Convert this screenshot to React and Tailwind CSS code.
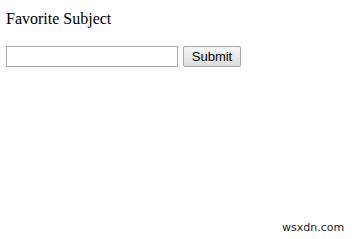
import React from 'react';

const App = () => {
  return (
    <div className="relative w-[356px] h-[239px] bg-white overflow-hidden">
      <form className="px-[6px] pt-[10px]" onSubmit={(e) => e.preventDefault()}>
        <p className="text-[16px] leading-[18px] text-black" style={{ fontFamily: '"Liberation Serif", serif' }}>
          Favorite Subject
        </p>
        <div className="flex items-center gap-[5px] mt-[18px]">
          <input
            type="text"
            className="w-[172px] h-[21px] border border-[#a9a9a9] bg-white outline-none"
          />
          <button
            type="submit"
            className="w-[58px] h-[21px] border border-[#a6a6a6] rounded-[2px] bg-gradient-to-b from-[#f6f6f6] to-[#dddddd] text-[13px] leading-[19px] text-black"
            style={{ fontFamily: '"Liberation Sans", Arial, sans-serif' }}
          >
            Submit
          </button>
        </div>
      </form>
      <span
        className="absolute left-[282px] top-[221px] text-[11px] leading-[14px] text-[#222]"
        style={{ fontFamily: '"DejaVu Sans", sans-serif' }}
      >
        wsxdn.com
      </span>
    </div>
  );
};

export default App;
